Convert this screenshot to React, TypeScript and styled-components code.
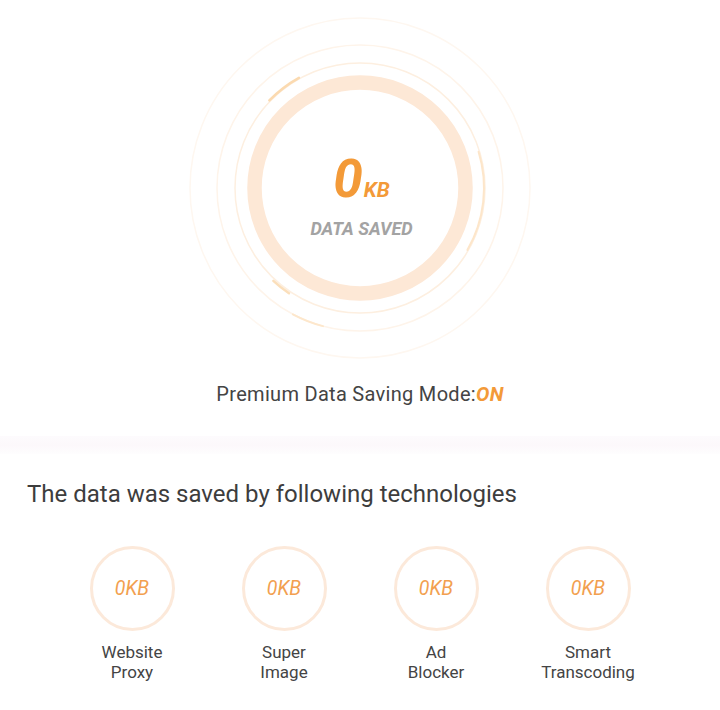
import React from 'react'
import styled, { createGlobalStyle } from 'styled-components'

const GlobalStyle = createGlobalStyle`
  html, body {
    margin: 0;
    padding: 0;
    background: #ffffff;
  }
  body {
    font-family: Roboto, 'Liberation Sans', sans-serif;
    color: #3d3d3d;
  }
`

const ORANGE = '#f39a38'

const techs = [
  { value: '0KB', label: ['Website', 'Proxy'] },
  { value: '0KB', label: ['Super', 'Image'] },
  { value: '0KB', label: ['Ad', 'Blocker'] },
  { value: '0KB', label: ['Smart', 'Transcoding'] },
]

// arc path, angles clockwise from 12 o'clock
const arc = (cx: number, cy: number, r: number, a0: number, a1: number) => {
  const p = (a: number) => {
    const rad = (a * Math.PI) / 180
    return [cx + r * Math.sin(rad), cy - r * Math.cos(rad)]
  }
  const [x0, y0] = p(a0)
  const [x1, y1] = p(a1)
  const large = a1 - a0 > 180 ? 1 : 0
  return `M ${x0} ${y0} A ${r} ${r} 0 ${large} 1 ${x1} ${y1}`
}

const Rings = () => (
  <svg width='360' height='360' viewBox='0 0 360 360'>
    <circle cx='180' cy='180' r='170' fill='none' stroke='#fef7f0' strokeWidth='1.5' />
    <circle cx='180' cy='180' r='143' fill='none' stroke='#fef4ea' strokeWidth='1.5' />
    <circle cx='180' cy='180' r='125' fill='none' stroke='#fdefe0' strokeWidth='1.5' />
    <path d={arc(180, 180, 126, 314, 331)} fill='none' stroke='#fbdab0' strokeWidth='2.5' strokeLinecap='round' />
    <path d={arc(180, 180, 124, 73, 120)} fill='none' stroke='#fde6ca' strokeWidth='2' strokeLinecap='round' />
    <path d={arc(180, 180, 127, 214, 223)} fill='none' stroke='#fbdfbb' strokeWidth='2.5' strokeLinecap='round' />
    <path d={arc(180, 180, 143, 195, 208)} fill='none' stroke='#fde7cc' strokeWidth='2' strokeLinecap='round' />
    <circle cx='180' cy='180' r='105.5' fill='none' stroke='#fde8d6' strokeWidth='14.5' />
  </svg>
)

const App = () => (
  <>
    <GlobalStyle />
    <Page>
      <Hero>
        <Dial>
          <Rings />
          <DialText>
            <Amount>
              0<Unit>KB</Unit>
            </Amount>
            <Caption>DATA SAVED</Caption>
          </DialText>
        </Dial>
        <Mode>
          Premium Data Saving Mode:<On>ON</On>
        </Mode>
      </Hero>
      <Band />
      <Section>
        <Heading>The data was saved by following technologies</Heading>
        <TechRow>
          {techs.map(t => (
            <Tech key={t.label.join(' ')}>
              <Badge>{t.value}</Badge>
              <Label>
                {t.label[0]}
                <br />
                {t.label[1]}
              </Label>
            </Tech>
          ))}
        </TechRow>
      </Section>
    </Page>
  </>
)

const Page = styled.div`
  width: 720px;
  height: 710px;
  overflow: hidden;
  background: #ffffff;
`

const Hero = styled.div`
  display: flex;
  flex-direction: column;
  align-items: center;
  padding-top: 8px;
`

const Dial = styled.div`
  display: grid;
  width: 360px;
  height: 360px;

  & > * {
    grid-area: 1 / 1;
  }
`

const DialText = styled.div`
  display: flex;
  flex-direction: column;
  align-items: center;
  justify-content: center;
  padding-top: 16px;
  padding-left: 3px;
`

const Amount = styled.div`
  font-size: 53px;
  font-weight: 700;
  font-style: italic;
  color: ${ORANGE};
  line-height: 1;
`

const Unit = styled.span`
  font-size: 21px;
  margin-left: 1px;
`

const Caption = styled.div`
  margin-top: 12px;
  font-size: 18px;
  font-weight: 700;
  font-style: italic;
  color: #a3a3a3;
`

const Mode = styled.div`
  margin-top: 14px;
  font-size: 20px;
  color: #444444;
  letter-spacing: 0.3px;
`

const On = styled.span`
  font-weight: 700;
  font-style: italic;
  color: ${ORANGE};
`

const Band = styled.div`
  margin-top: 30px;
  height: 18px;
  background: linear-gradient(#fdfbfd, #fcf8fb 50%, #fefdfe);
`

const Section = styled.div`
  padding: 26px 0 0 27px;
`

const Heading = styled.h2`
  margin: 0;
  font-size: 24px;
  font-weight: 400;
  color: #3d3d3d;
`

const TechRow = styled.div`
  display: grid;
  grid-template-columns: repeat(4, 152px);
  margin: 38px 0 0 29px;
`

const Tech = styled.div`
  display: flex;
  flex-direction: column;
  align-items: center;
`

const Badge = styled.div`
  box-sizing: border-box;
  width: 85px;
  height: 85px;
  border-radius: 50%;
  border: 3px solid #fce9da;
  display: flex;
  align-items: center;
  justify-content: center;
  font-size: 19.5px;
  font-style: italic;
  color: #f2a04f;
`

const Label = styled.div`
  margin-top: 11px;
  font-size: 17px;
  line-height: 20px;
  text-align: center;
  color: #444444;
`

export default App
